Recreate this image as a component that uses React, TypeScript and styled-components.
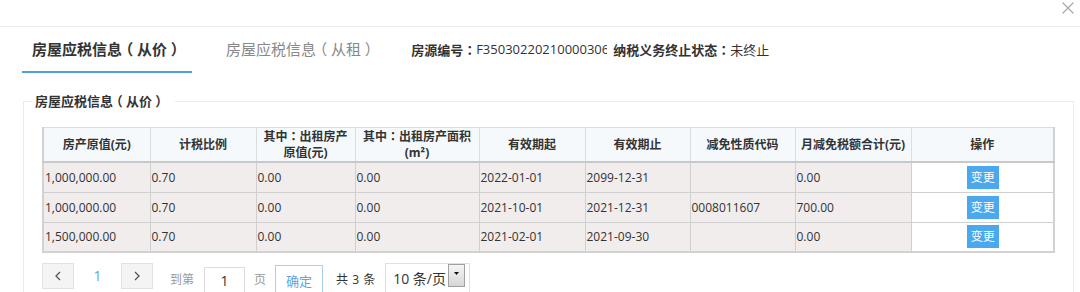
import React from "react";
import styled, { createGlobalStyle } from "styled-components";

const FONT = `"Open Sans", "Noto Sans CJK SC", sans-serif`;

const Global = createGlobalStyle`
  html, body {
    margin: 0;
    padding: 0;
    overflow: hidden;
    background: #ffffff;
    font-family: ${FONT};
    color: #333;
  }
  * { box-sizing: border-box; }
`;

/* full-width punctuation centred in its em box, as in the reference */
const Colon = styled.span`
  font-family: "Noto Sans CJK TC", "Noto Sans CJK SC", sans-serif;
`;

const Paren = styled.span`
  font-feature-settings: "halt";
  padding: 0 0.25em;
`;

const T = ({ children }: { children: string }) => (
  <>
    {children.split(/([：（）])/).map((part, i) => {
      if (part === "：") return <Colon key={i}>{part}</Colon>;
      if (part === "（" || part === "）") return <Paren key={i}>{part}</Paren>;
      return part;
    })}
  </>
);

const Dialog = styled.div`
  width: 1080px;
  height: 292px;
  overflow: hidden;
  background: #fff;
`;

const TopBar = styled.div`
  height: 27px;
  border-bottom: 1px solid #ededed;
  display: flex;
  justify-content: flex-end;
  align-items: flex-start;
  padding: 2px 6px 0 0;
`;

const CloseBtn = styled.button`
  border: 0;
  background: transparent;
  padding: 0;
  width: 12px;
  height: 12px;
  display: flex;
  cursor: pointer;
`;

const TabBar = styled.div`
  display: flex;
  align-items: flex-start;
  padding-left: 22px;
  height: 46px;
`;

const Tab = styled.div<{ $active?: boolean }>`
  padding: 0 10px;
  height: 46px;
  line-height: 44px;
  font-size: 15px;
  white-space: nowrap;
  font-weight: ${(p) => (p.$active ? 700 : 400)};
  color: ${(p) => (p.$active ? "#333" : "#888")};
  border-bottom: 2px solid ${(p) => (p.$active ? "#4a9fe6" : "transparent")};
  & + & {
    margin-left: 24px;
  }
`;

const Info = styled.div`
  margin-left: 25px;
  height: 44px;
  display: flex;
  align-items: center;
  font-size: 13px;
  white-space: nowrap;
  color: #333;
`;

const Label = styled.span`
  font-weight: 700;
`;

const Clip = styled.span`
  display: inline-block;
  width: 131px;
  overflow: hidden;
  white-space: nowrap;
  margin-right: 6px;
`;

const Fieldset = styled.fieldset`
  margin: 19px 6px 0 23px;
  border: 1px solid #ebebeb;
  padding: 17px 20px 40px 18px;
  min-width: 0;
`;

const Legend = styled.legend`
  margin-left: -10px;
  padding: 0 10px 0 3px;
  font-size: 13px;
  line-height: 18px;
  font-weight: 700;
  color: #333;
`;

const Table = styled.table`
  width: 1011px;
  table-layout: fixed;
  border-collapse: collapse;
  border: 2px solid #d2d2d2;
  border-top: 1px solid #dcdcdc;
  font-size: 12px;
`;

const Th = styled.th`
  height: 31px;
  padding: 0;
  line-height: 16px;
  font-weight: 700;
  font-size: 12px;
  color: #333;
  text-align: center;
  background: #f5f9fc;
  border: 1px solid #dcdcdc;
  border-bottom: 2px solid #c9c9c9;
`;

const Td = styled.td<{ $plain?: boolean }>`
  height: 30px;
  padding: 0 0 0 1px;
  color: #333;
  font-size: 12px;
  white-space: nowrap;
  background: ${(p) => (p.$plain ? "#ffffff" : "#f1eded")};
  border: 1px solid #d0d0d0;
  text-align: ${(p) => (p.$plain ? "center" : "left")};
  vertical-align: middle;
`;

const ChangeBtn = styled.button`
  width: 32px;
  height: 23px;
  border: 0;
  padding: 0;
  background: #4aa8ee;
  color: #fff;
  font-family: ${FONT};
  font-size: 12px;
  line-height: 23px;
  vertical-align: middle;
  cursor: pointer;
`;

const Pager = styled.div`
  display: flex;
  align-items: flex-start;
  margin-top: 10px;
  white-space: nowrap;
`;

const PageArrow = styled.button`
  width: 32px;
  height: 26px;
  border: 1px solid #e2e2e2;
  background: #f4f4f4;
  padding: 0;
  display: flex;
  align-items: center;
  justify-content: center;
  cursor: pointer;
`;

const PageNum = styled.span`
  width: 47px;
  text-align: center;
  line-height: 26px;
  font-size: 14px;
  color: #5ba5e6;
`;

const PagerText = styled.span<{ $dark?: boolean; $ml: number }>`
  margin-top: 4px;
  margin-left: ${(p) => p.$ml}px;
  line-height: 26px;
  font-size: 12px;
  color: ${(p) => (p.$dark ? "#333" : "#999")};
  word-spacing: 1px;
`;

const JumpInput = styled.input`
  margin-top: 4px;
  margin-left: 10px;
  width: 41px;
  height: 26px;
  border: 1px solid #dcdcdc;
  text-align: center;
  font-family: ${FONT};
  font-size: 14px;
  color: #333;
  padding: 0;
  outline: none;
`;

const ConfirmBtn = styled.button`
  margin-top: 2px;
  margin-left: 9px;
  width: 48px;
  height: 30px;
  border: 1px solid #a9d0f2;
  background: #fff;
  color: #5ba5e6;
  font-family: ${FONT};
  font-size: 13px;
  padding: 0;
  cursor: pointer;
`;

const SizeSelect = styled.div`
  margin-left: 10px;
  width: 85px;
  height: 32px;
  border: 1px solid #e0e0e0;
  display: flex;
  align-items: flex-start;
  justify-content: space-between;
  padding: 0 4px 0 7px;
  font-size: 14px;
  color: #333;
`;

const SizeText = styled.span`
  line-height: 30px;
`;

const DropBtn = styled.span`
  width: 17px;
  height: 23px;
  border: 1px solid #a0a0a0;
  background: linear-gradient(#f6f6f6, #d6d6d6);
  display: flex;
  align-items: center;
  justify-content: center;
  padding-bottom: 4px;
`;

const cols = [107, 106, 99, 124, 106, 105, 105, 116, 143];

const rows = [
  ["1,000,000.00", "0.70", "0.00", "0.00", "2022-01-01", "2099-12-31", "", "0.00"],
  ["1,000,000.00", "0.70", "0.00", "0.00", "2021-10-01", "2021-12-31", "0008011607", "700.00"],
  ["1,500,000.00", "0.70", "0.00", "0.00", "2021-02-01", "2021-09-30", "", "0.00"],
];

const Chevron = ({ dir }: { dir: "left" | "right" }) => (
  <svg width="6" height="10" viewBox="0 0 6 10">
    <polyline
      points={dir === "left" ? "5,1 1,5 5,9" : "1,1 5,5 1,9"}
      fill="none"
      stroke="#555"
      strokeWidth="1.3"
    />
  </svg>
);

export default function App() {
  return (
    <>
      <Global />
      <Dialog>
        <TopBar>
          <CloseBtn aria-label="close">
            <svg width="12" height="12" viewBox="0 0 12 12">
              <path d="M0.5 0.5 L11.5 11.5 M11.5 0.5 L0.5 11.5" stroke="#a8a8a8" strokeWidth="1.2" />
            </svg>
          </CloseBtn>
        </TopBar>
        <TabBar>
          <Tab $active>
            <T>房屋应税信息（从价）</T>
          </Tab>
          <Tab>
            <T>房屋应税信息（从租）</T>
          </Tab>
          <Info>
            <Label>
              <T>房源编号：</T>
            </Label>
            <Clip>F350302202100003066</Clip>
            <Label>
              <T>纳税义务终止状态：</T>
            </Label>
            <span>未终止</span>
          </Info>
        </TabBar>
        <Fieldset>
          <Legend>
            <T>房屋应税信息（从价）</T>
          </Legend>
          <Table>
            <colgroup>
              {cols.map((w, i) => (
                <col key={i} style={{ width: w }} />
              ))}
            </colgroup>
            <thead>
              <tr>
                <Th>房产原值(元)</Th>
                <Th>计税比例</Th>
                <Th>
                  <T>其中：出租房产</T>
                  <br />
                  原值(元)
                </Th>
                <Th>
                  <T>其中：出租房产面积</T>
                  <br />
                  (m²)
                </Th>
                <Th>有效期起</Th>
                <Th>有效期止</Th>
                <Th>减免性质代码</Th>
                <Th>月减免税额合计(元)</Th>
                <Th>操作</Th>
              </tr>
            </thead>
            <tbody>
              {rows.map((r, i) => (
                <tr key={i}>
                  {r.map((c, j) => (
                    <Td key={j}>{c}</Td>
                  ))}
                  <Td $plain>
                    <ChangeBtn>变更</ChangeBtn>
                  </Td>
                </tr>
              ))}
            </tbody>
          </Table>
          <Pager>
            <PageArrow aria-label="prev">
              <Chevron dir="left" />
            </PageArrow>
            <PageNum>1</PageNum>
            <PageArrow aria-label="next">
              <Chevron dir="right" />
            </PageArrow>
            <PagerText $ml={17}>到第</PagerText>
            <JumpInput defaultValue="1" />
            <PagerText $ml={9}>页</PagerText>
            <ConfirmBtn>确定</ConfirmBtn>
            <PagerText $ml={13} $dark>
              共 3 条
            </PagerText>
            <SizeSelect>
              <SizeText>10 条/页</SizeText>
              <DropBtn>
                <svg width="5" height="3" viewBox="0 0 5 3">
                  <polygon points="0,0 5,0 2.5,3" fill="#111" />
                </svg>
              </DropBtn>
            </SizeSelect>
          </Pager>
        </Fieldset>
      </Dialog>
    </>
  );
}
